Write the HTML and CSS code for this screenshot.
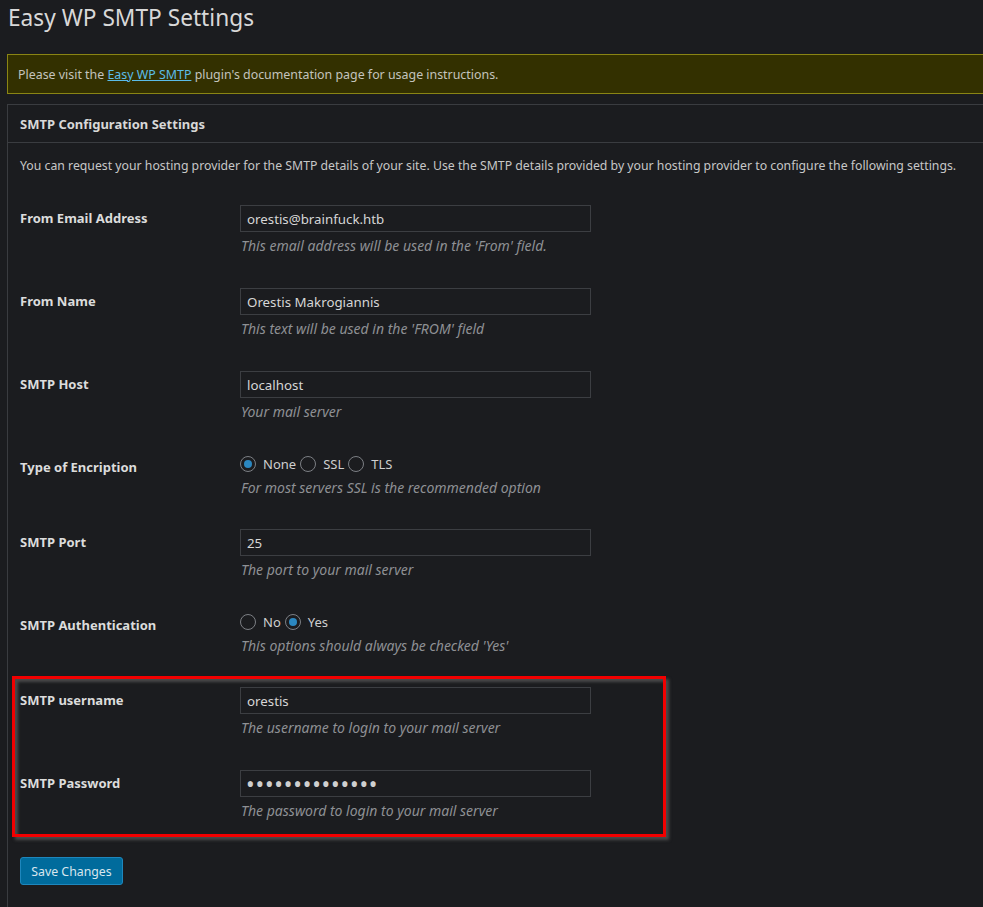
FILE: index.html
```html
<!DOCTYPE html>
<html lang="en">
<head>
<meta charset="utf-8">
<title>Easy WP SMTP Settings</title>
<link rel="stylesheet" href="styles.css">
</head>
<body>
<div class="wrap">
  <h1 class="page-title">Easy WP SMTP Settings</h1>
  <div class="notice">Please visit the <a href="#" class="notice-link">Easy WP SMTP</a> plugin's documentation page for usage instructions.</div>
  <div class="panel">
    <h2 class="panel-head">SMTP Configuration Settings</h2>
    <div class="panel-body">
      <p class="intro">You can request your hosting provider for the SMTP details of your site. Use the SMTP details provided by your hosting provider to configure the following settings.</p>

      <div class="row">
        <div class="label">From Email Address</div>
        <div class="field">
          <input class="text-input" type="text" value="orestis@brainfuck.htb">
          <p class="desc">This email address will be used in the 'From' field.</p>
        </div>
      </div>

      <div class="row">
        <div class="label">From Name</div>
        <div class="field">
          <input class="text-input" type="text" value="Orestis Makrogiannis">
          <p class="desc">This text will be used in the 'FROM' field</p>
        </div>
      </div>

      <div class="row">
        <div class="label">SMTP Host</div>
        <div class="field">
          <input class="text-input" type="text" value="localhost">
          <p class="desc">Your mail server</p>
        </div>
      </div>

      <div class="row row-radio">
        <div class="label">Type of Encription</div>
        <div class="field">
          <div class="radios">
            <label class="radio"><input type="radio" name="enc" checked><span>None</span></label>
            <label class="radio"><input type="radio" name="enc"><span>SSL</span></label>
            <label class="radio"><input type="radio" name="enc"><span>TLS</span></label>
          </div>
          <p class="desc">For most servers SSL is the recommended option</p>
        </div>
      </div>

      <div class="row">
        <div class="label">SMTP Port</div>
        <div class="field">
          <input class="text-input" type="text" value="25">
          <p class="desc">The port to your mail server</p>
        </div>
      </div>

      <div class="row row-radio">
        <div class="label">SMTP Authentication</div>
        <div class="field">
          <div class="radios">
            <label class="radio"><input type="radio" name="auth"><span>No</span></label>
            <label class="radio"><input type="radio" name="auth" checked><span>Yes</span></label>
          </div>
          <p class="desc">This options should always be checked 'Yes'</p>
        </div>
      </div>

      <div class="row">
        <div class="label">SMTP username</div>
        <div class="field">
          <input class="text-input" type="text" value="orestis">
          <p class="desc">The username to login to your mail server</p>
        </div>
      </div>

      <div class="row">
        <div class="label">SMTP Password</div>
        <div class="field">
          <input class="text-input pw-input" type="password" value="kHGuERB29DNiNE">
          <p class="desc">The password to login to your mail server</p>
        </div>
      </div>

      <div class="actions">
        <button class="btn-primary" type="button">Save Changes</button>
      </div>
    </div>
  </div>
</div>
<div class="highlight"></div>
</body>
</html>
```
FILE: styles.css
```css
html, body {
  margin: 0;
  padding: 0;
  background: #1b1c1f;
  overflow: hidden;
}
body {
  font-family: "Noto Sans", "Open Sans", sans-serif;
  font-size: 13px;
  color: #c7c7c7;
  height: 907px;
}
.wrap {
  width: 976px;
  padding-left: 7px;
}
.page-title {
  margin: 0;
  padding: 3px 0 0 1px;
  font-size: 22.7px;
  line-height: 29px;
  font-weight: 400;
  color: #d8d8d8;
}
.notice {
  margin-top: 22px;
  height: 38px;
  line-height: 40px;
  border: 1px solid #8a8514;
  border-right: 0;
  background: #333000;
  padding-left: 10px;
  color: #c3c3bd;
  font-size: 12.4px;
}
.notice-link {
  color: #5bbde8;
  text-decoration: underline;
}
.panel {
  margin-top: 10px;
  border: 1px solid #3a3c40;
  border-right: 0;
  border-bottom: 0;
  height: 803px;
  box-sizing: border-box;
}
.panel-head {
  margin: 0;
  height: 37px;
  line-height: 39px;
  padding-left: 12px;
  font-size: 13px;
  font-weight: 700;
  color: #d8d8d8;
  border-bottom: 1px solid #3a3c40;
}
.panel-body {
  padding-left: 12px;
}
.intro {
  margin: 13px 0 13px;
  line-height: 20px;
  font-size: 12.28px;
  white-space: nowrap;
}
.row {
  display: grid;
  grid-template-columns: 220px 351px;
  padding: 16px 0;
}
.row-radio {
  padding-bottom: 15px;
}
.label {
  font-weight: 700;
  line-height: 27px;
  color: #dcdcdc;
}
.row-radio .label {
  line-height: 26px;
}
.field {
  display: flex;
  flex-direction: column;
}
.text-input {
  box-sizing: border-box;
  width: 351px;
  height: 27px;
  margin: 0;
  padding: 0 6px;
  border: 1px solid #3c3e42;
  border-radius: 0;
  background: #1b1c1f;
  color: #d6d6d6;
  font-family: inherit;
  font-size: 13.3px;
  outline: none;
}
.pw-input {
  font-size: 23px;
  letter-spacing: 0.8px;
  padding-left: 5px;
  color: #cfcfcf;
}
.desc {
  margin: 4px 0 0 1px;
  line-height: 20px;
  font-style: italic;
  font-size: 14px;
  color: #8e9094;
}
.radios {
  display: flex;
  align-items: center;
  height: 20px;
}
.radio {
  display: flex;
  align-items: center;
  margin-right: 4px;
  color: #cfcfcf;
}
.radio input {
  appearance: none;
  -webkit-appearance: none;
  box-sizing: border-box;
  width: 16px;
  height: 16px;
  margin: 0 7px 0 0;
  border: 1px solid #7c7f84;
  border-radius: 50%;
  background: transparent;
  display: grid;
  place-items: center;
}
.radio input:checked::before {
  content: "";
  width: 8px;
  height: 8px;
  border-radius: 50%;
  background: #2b87c0;
}
.actions {
  margin-top: 20px;
}
.btn-primary {
  box-sizing: border-box;
  width: 103px;
  height: 28px;
  padding: 0;
  border: 1px solid #1e87bd;
  border-radius: 3px;
  background: #006b9c;
  color: #d9e6ee;
  font-family: inherit;
  font-size: 12.3px;
}
.highlight {
  position: absolute;
  left: 12px;
  top: 676px;
  width: 654px;
  height: 161px;
  box-sizing: border-box;
  border: 3px solid #f20000;
  box-shadow: 3px 3px 3px #4a4a4a, inset 3px 3px 3px #4a4a4a;
}
```
